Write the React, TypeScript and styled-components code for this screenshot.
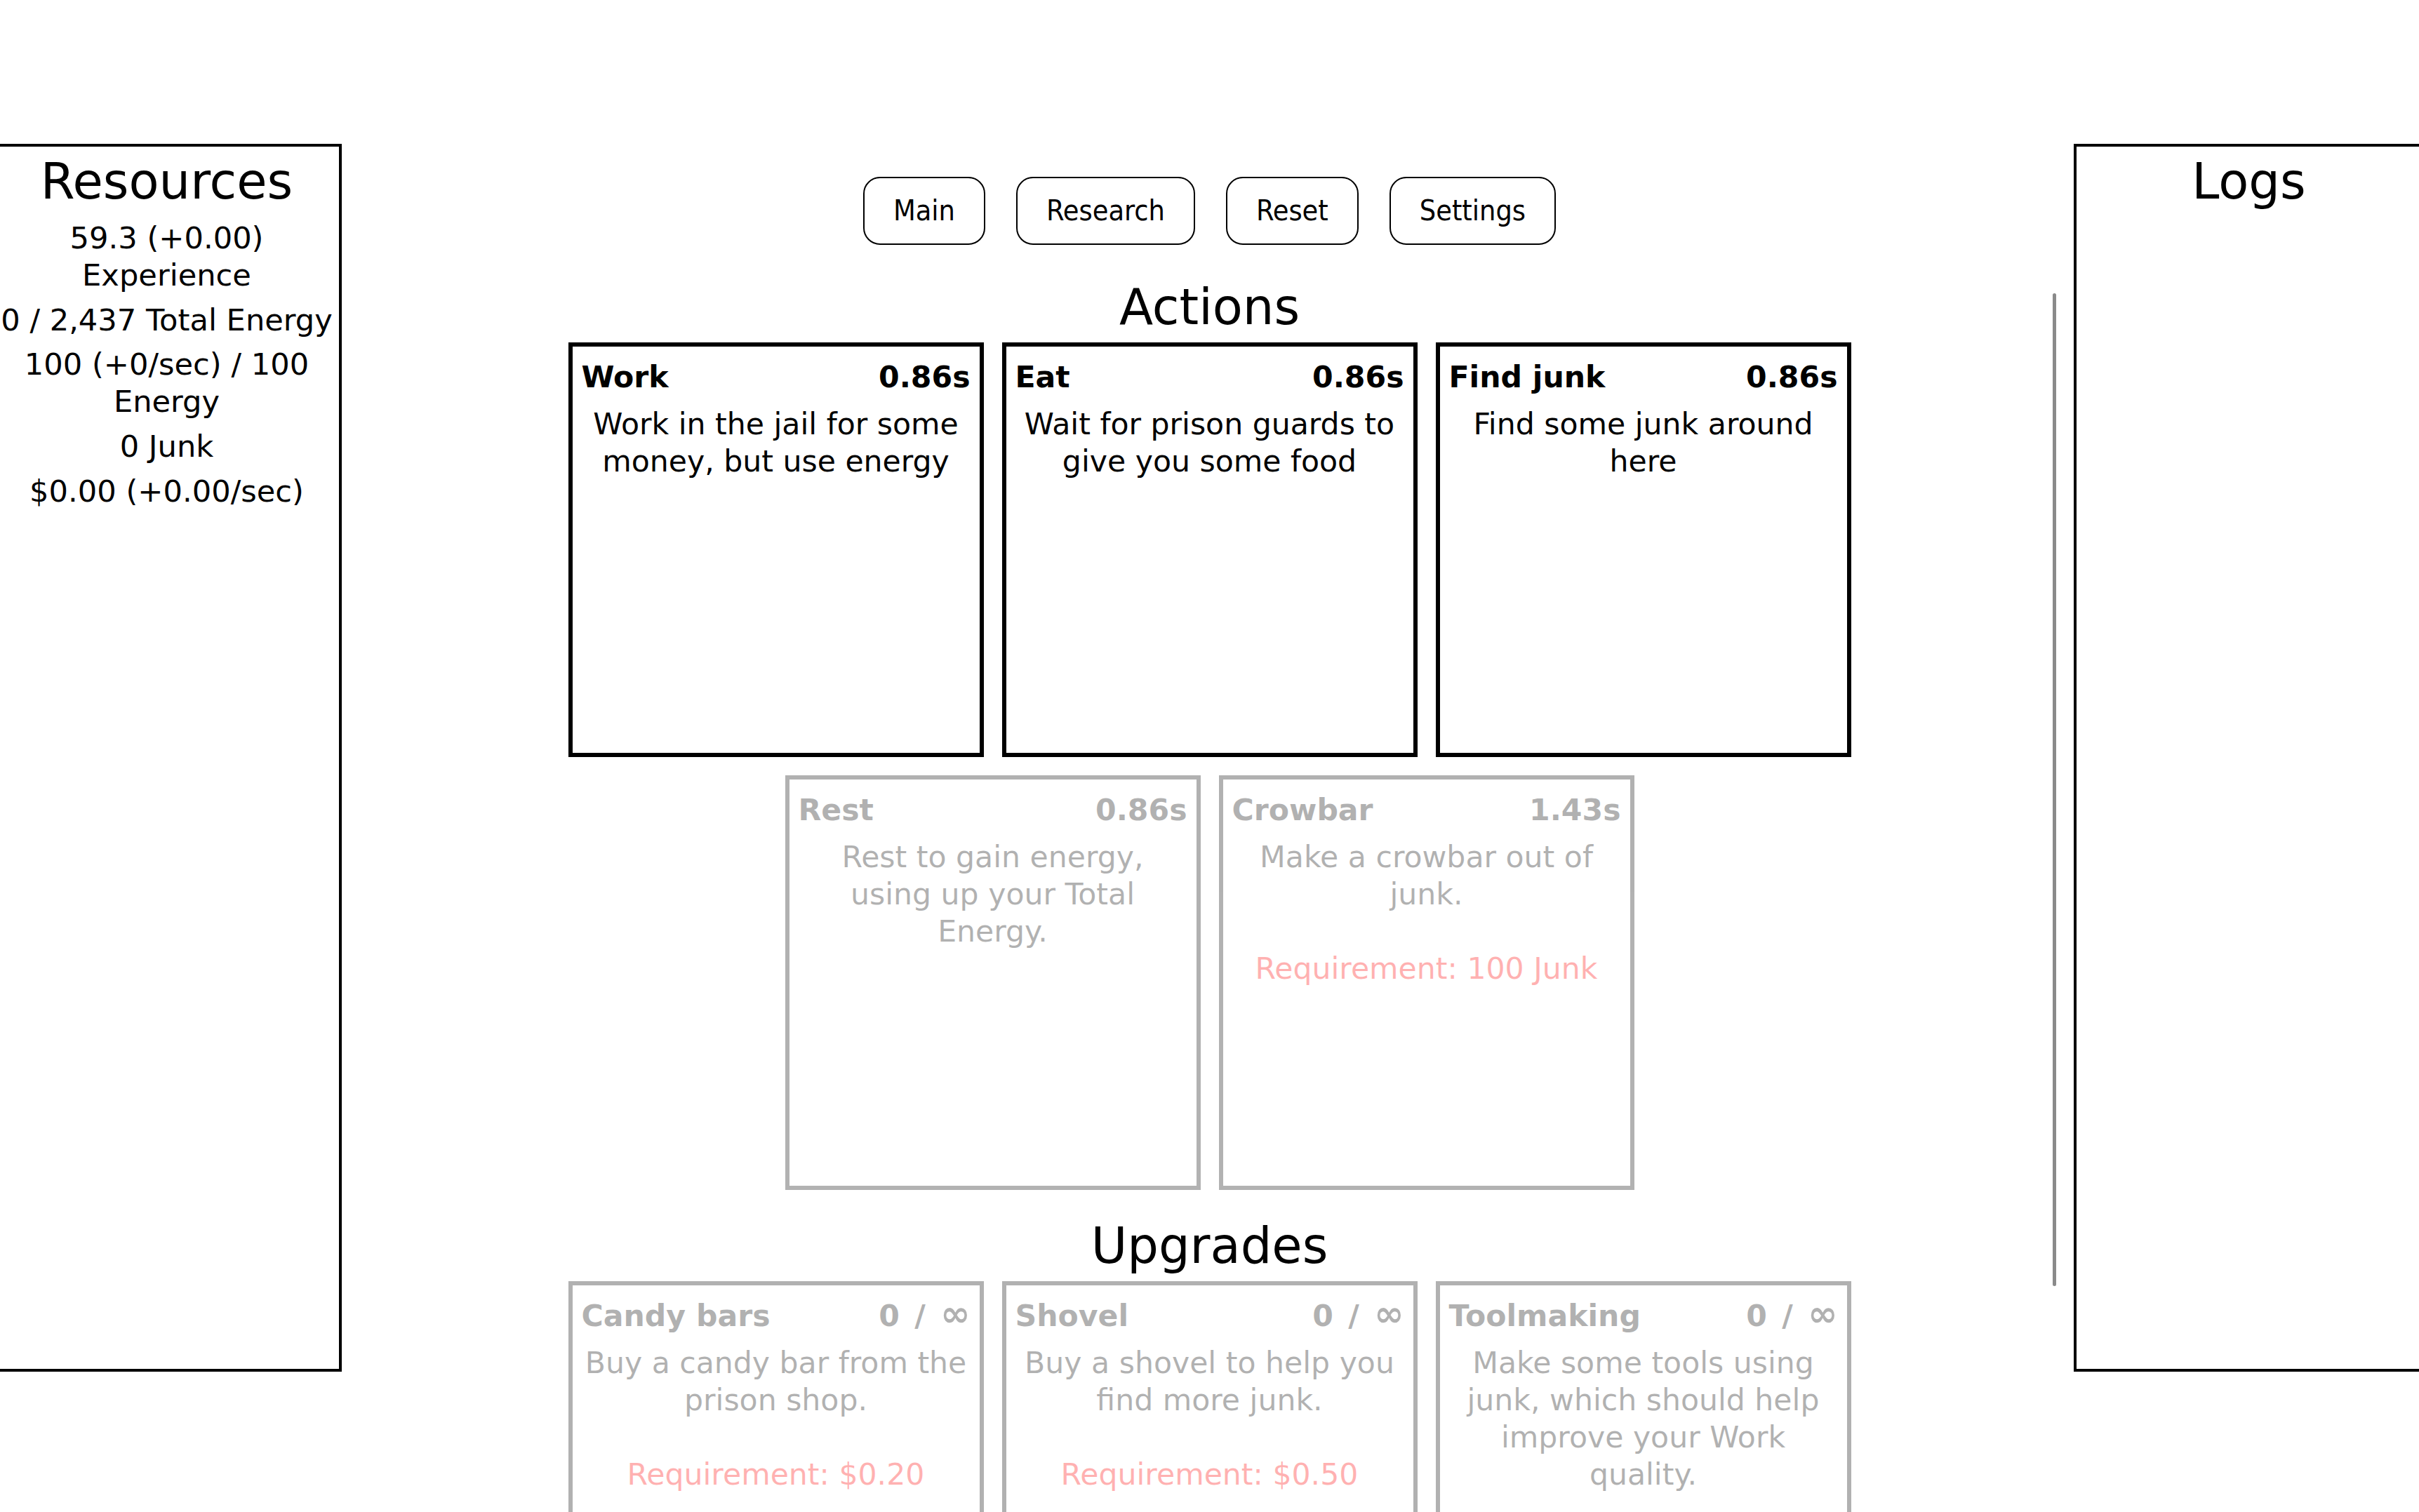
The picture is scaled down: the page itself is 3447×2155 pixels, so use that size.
import React from "react";
import styled, { createGlobalStyle } from "styled-components";

const GlobalStyle = createGlobalStyle`
  html, body {
    margin: 0;
    padding: 0;
    overflow: hidden;
    background: #ffffff;
  }
  body {
    font-family: "DejaVu Sans", Verdana, sans-serif;
    color: #000000;
  }
`;

const Page = styled.div`
  display: grid;
  grid-template-columns: 1fr 1854px 1fr;
  align-items: start;
  padding-top: 205px;
  width: 3447px;
  height: 2155px;
  box-sizing: border-box;
`;

const SideColumn = styled.div<{ $side: "left" | "right" }>`
  display: flex;
  justify-content: ${(p) => (p.$side === "left" ? "flex-start" : "flex-end")};
  align-items: flex-start;
  gap: 25px;
`;

const Panel = styled.section<{ $side: "left" | "right" }>`
  width: 499px;
  height: 1750px;
  box-sizing: border-box;
  border: 4.4px solid #000;
  flex-shrink: 0;
  ${(p) => (p.$side === "left" ? "margin-left: -12px;" : "margin-right: -7px;")}
  text-align: center;
`;

const PanelTitle = styled.h1`
  margin: 9px 0 0 0;
  font-size: 70.4px;
  font-weight: normal;
  line-height: normal;
`;

const ResourceList = styled.div`
  margin-top: 13px;
  display: flex;
  flex-direction: column;
  gap: 11px;
`;

const ResourceItem = styled.div`
  font-size: 43.2px;
  line-height: 52.8px;
`;

const ScrollTrack = styled.div`
  width: 4.6px;
  height: 1415px;
  margin-top: 213px;
  border-radius: 3px;
  background: #8a8a8a;
  flex-shrink: 0;
`;

const Center = styled.main`
  display: flex;
  flex-direction: column;
  align-items: center;
  padding-top: 47px;
`;

const Nav = styled.nav`
  display: flex;
  justify-content: center;
  gap: 44px;
`;

const NavButton = styled.button`
  font-family: "DejaVu Sans Condensed", "DejaVu Sans", Verdana, sans-serif;
  font-stretch: condensed;
  font-size: 41px;
  line-height: 41px;
  padding: 25.8px 41px;
  border: 2.2px solid #000;
  border-radius: 24px;
  background: #fff;
  color: #000;
  cursor: pointer;
`;

const SectionTitle = styled.h2<{ $top: number }>`
  margin: ${(p) => p.$top}px 0 -4px 0;
  font-size: 70.4px;
  font-weight: normal;
  line-height: normal;
`;

const CardGrid = styled.div`
  width: 1854px;
  display: flex;
  flex-wrap: wrap;
  justify-content: center;
`;

const Card = styled.div<{ $disabled?: boolean }>`
  width: 592px;
  height: 591px;
  margin: 13px;
  box-sizing: border-box;
  border: 6.6px solid #000;
  padding: 17px 13px 13px 13px;
  opacity: ${(p) => (p.$disabled ? 0.3 : 1)};
  cursor: pointer;
  font-size: 42.6px;
  line-height: 52.8px;
`;

const CardHeader = styled.div`
  display: flex;
  justify-content: space-between;
  font-weight: bold;
  height: 52.8px;
`;

const CardValue = styled.span`
  word-spacing: 0.15em;
`;

const Infinity = styled.span`
  font-size: 1.2em;
  line-height: 0;
`;

const CardDesc = styled.div`
  margin-top: 15px;
  text-align: center;
`;

const Requirement = styled.div`
  margin-top: 52.8px;
  text-align: center;
  color: #ff0000;
`;

type Item = {
  name: string;
  value: string;
  desc: string;
  req?: string;
  disabled?: boolean;
};

const actions: Item[] = [
  { name: "Work", value: "0.86s", desc: "Work in the jail for some money, but use energy" },
  { name: "Eat", value: "0.86s", desc: "Wait for prison guards to give you some food" },
  { name: "Find junk", value: "0.86s", desc: "Find some junk around here" },
  { name: "Rest", value: "0.86s", desc: "Rest to gain energy, using up your Total Energy.", disabled: true },
  {
    name: "Crowbar",
    value: "1.43s",
    desc: "Make a crowbar out of junk.",
    req: "Requirement: 100 Junk",
    disabled: true,
  },
];

const upgrades: Item[] = [
  {
    name: "Candy bars",
    value: "0 / ∞",
    desc: "Buy a candy bar from the prison shop.",
    req: "Requirement: $0.20",
    disabled: true,
  },
  {
    name: "Shovel",
    value: "0 / ∞",
    desc: "Buy a shovel to help you find more junk.",
    req: "Requirement: $0.50",
    disabled: true,
  },
  {
    name: "Toolmaking",
    value: "0 / ∞",
    desc: "Make some tools using junk, which should help improve your Work quality.",
    disabled: true,
  },
];

const resources = [
  "59.3 (+0.00) Experience",
  "0 / 2,437 Total Energy",
  "100 (+0/sec) / 100 Energy",
  "0 Junk",
  "$0.00 (+0.00/sec)",
];

function renderValue(value: string) {
  if (!value.includes("∞")) return value;
  const [before] = value.split("∞");
  return (
    <>
      {before}
      <Infinity>∞</Infinity>
    </>
  );
}

function ItemCard({ item }: { item: Item }) {
  return (
    <Card $disabled={item.disabled}>
      <CardHeader>
        <span>{item.name}</span>
        <CardValue>{renderValue(item.value)}</CardValue>
      </CardHeader>
      <CardDesc>{item.desc}</CardDesc>
      {item.req && <Requirement>{item.req}</Requirement>}
    </Card>
  );
}

export default function App() {
  return (
    <>
      <GlobalStyle />
      <Page>
        <SideColumn $side="left">
          <Panel $side="left">
            <PanelTitle>Resources</PanelTitle>
            <ResourceList>
              {resources.map((r) => (
                <ResourceItem key={r}>{r}</ResourceItem>
              ))}
            </ResourceList>
          </Panel>
        </SideColumn>
        <Center>
          <Nav>
            <NavButton>Main</NavButton>
            <NavButton>Research</NavButton>
            <NavButton>Reset</NavButton>
            <NavButton>Settings</NavButton>
          </Nav>
          <SectionTitle $top={48}>Actions</SectionTitle>
          <CardGrid>
            {actions.map((a) => (
              <ItemCard key={a.name} item={a} />
            ))}
          </CardGrid>
          <SectionTitle $top={26}>Upgrades</SectionTitle>
          <CardGrid>
            {upgrades.map((u) => (
              <ItemCard key={u.name} item={u} />
            ))}
          </CardGrid>
        </Center>
        <SideColumn $side="right">
          <ScrollTrack />
          <Panel $side="right">
            <PanelTitle>Logs</PanelTitle>
          </Panel>
        </SideColumn>
      </Page>
    </>
  );
}
